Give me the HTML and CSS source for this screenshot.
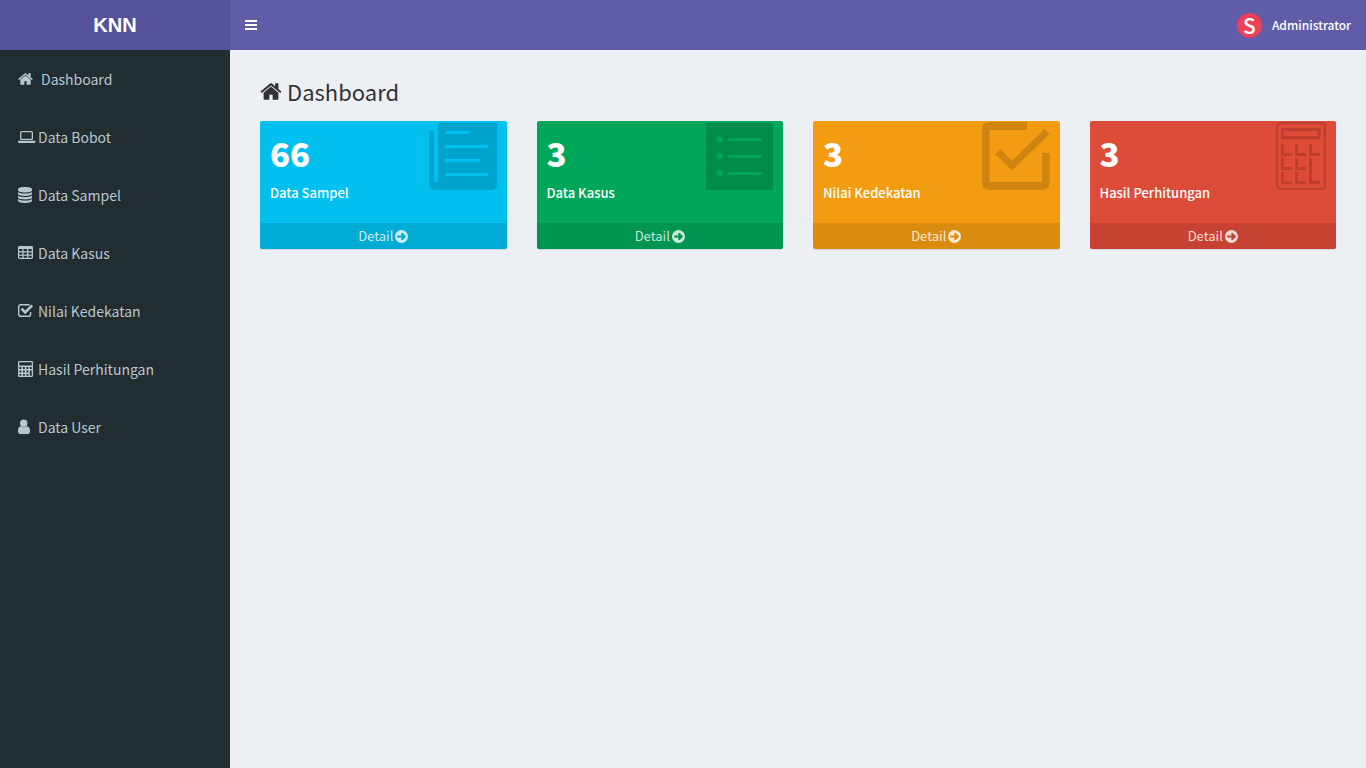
FILE: index.html
```html
<!DOCTYPE html>
<html lang="id">
<head>
<meta charset="utf-8">
<meta name="viewport" content="width=device-width, initial-scale=1">
<title>KNN - Dashboard</title>
<link rel="stylesheet" href="styles.css">
</head>
<body>
<svg class="sprite" aria-hidden="true">
  <symbol id="home" viewBox="64 0 1664 1792"><path d="M1472 992v480q0 26-19 45t-45 19h-384v-384h-256v384h-384q-26 0-45-19t-19-45v-480q0-1 .5-3t.5-3l575-474 575 474q1 2 1 6zm223-69l-62 74q-8 9-21 11h-3q-13 0-21-7l-692-577-692 577q-12 8-24 7-13-2-21-11l-62-74q-8-10-7-23.5t11-21.5l719-599q32-26 76-26t76 26l244 204v-195q0-14 9-23t23-9h192q14 0 23 9t9 23v408l219 182q10 8 11 21.5t-7 23.5z"/></symbol>
  <symbol id="arrow" viewBox="128 128 1536 1536"><path fill-rule="evenodd" d="M1413 896q0-27-18-45l-362-362q-18-18-45-18t-45 18l-91 91q-18 18-18 45t18 45l98 98h-502q-26 0-45 19t-19 45v128q0 26 19 45t45 19h502l-98 98q-18 18-18 45t18 45l91 91q18 18 45 18t45-18l362-362q18-18 18-45zM1664 896a768 768 0 1 1-1536 0a768 768 0 1 1 1536 0z"/></symbol>
</svg>
<header class="topbar">
  <a class="logo" href="#">KNN</a>
  <nav class="navbar">
    <button class="toggle" type="button" aria-label="Toggle navigation"><svg viewBox="0 0 12 10"><path d="M0 0h12v2H0zM0 4h12v2H0zM0 8h12v2H0z"/></svg></button>
    <a class="account" href="#"><span class="avatar">S</span>Administrator</a>
  </nav>
</header>
<div class="layout">
  <aside class="sidebar">
    <ul class="menu">
      <li><a class="menu-link menu-link-home" href="#"><svg class="menu-icon" viewBox="0 0 20 18"><use href="#home" y="1" width="15" height="16"/></svg>Dashboard</a></li>
      <li><a class="menu-link" href="#"><svg class="menu-icon" viewBox="0 0 20 18"><path fill-rule="evenodd" d="M3.500 3h10q1.500 0 1.500 1.500v6q0 1.500-1.500 1.500h-10q-1.500 0-1.500-1.500v-6q0-1.500 1.500-1.500zM3.300 4.200v6.500h10.400v-6.500zM0 12.800h17.500v1q0 1.200-1.500 1.200h-14.500q-1.500 0-1.500-1.200z"/></svg>Data Bobot</a></li>
      <li><a class="menu-link" href="#"><svg class="menu-icon" viewBox="0 0 20 18"><path d="M0 3.200C0 1.900 3 1 7 1s7 .9 7 2.200v1C14 5.500 11 6.500 7 6.500s-7-1-7-2.300zM0 6q2 1.600 7 1.600t7-1.600v1.800q0 2-7 2.100q-7-.1-7-2.100zM0 9.400q2 1.700 7 1.700t7-1.700v2q0 1.900-7 2q-7-.1-7-2zM0 12.900q2 1.700 7 1.700t7-1.700v1.900q0 2-7 2.200q-7-.2-7-2.200z"/></svg>Data Sampel</a></li>
      <li><a class="menu-link" href="#"><svg class="menu-icon" viewBox="0 0 20 18"><path fill-rule="evenodd" d="M1.400 2h12.200q1.400 0 1.400 1.400v10.200q0 1.400-1.400 1.400h-12.200q-1.400 0-1.400-1.400v-10.200q0-1.400 1.400-1.400zM1.200 5v2.300h3.200v-2.300zM5.600 5v2.300h3.500v-2.300zM10.400 5v2.300h3.300v-2.300zM1.200 8.400v2.200h3.200v-2.200zM5.600 8.400v2.200h3.500v-2.200zM10.400 8.400v2.200h3.300v-2.200zM1.200 11.700v2.100h3.200v-2.100zM5.600 11.700v2.100h3.500v-2.100zM10.400 11.700v2.100h3.300v-2.100z"/></svg>Data Kasus</a></li>
      <li><a class="menu-link" href="#"><svg class="menu-icon" viewBox="0 0 20 18"><path class="line" d="M11.700 2.900q-.5-.2-1.200-.2h-7.700q-2.100 0-2.100 2.100v7.400q0 2.100 2.100 2.100h7.700q2.100 0 2.100-2.100v-2.200"/><path d="M2.700 7.700l1.900-1.900 2.600 2.600 6-6 1.900 1.900-7.900 7.900z"/></svg>Nilai Kedekatan</a></li>
      <li><a class="menu-link" href="#"><svg class="menu-icon" viewBox="0 0 20 18"><path fill-rule="evenodd" d="M1.200 1h12.600q1.200 0 1.200 1.200v13.600q0 1.200-1.200 1.200h-12.600q-1.200 0-1.200-1.200v-13.600q0-1.200 1.200-1.200zM1.300 2.300v3.200h12.400v-3.200zM1.400 7.100v1.800h1.900v-1.800zM4.900 7.100v1.800h1.900v-1.800zM8.400 7.100v1.800h1.900v-1.800zM11.800 7.100v1.800h1.900v-1.800zM1.400 10.500v1.900h1.900v-1.900zM4.900 10.500v1.900h1.900v-1.900zM8.400 10.500v1.900h1.900v-1.900zM1.400 13.900v1.900h1.900v-1.900zM4.900 13.900v1.900h1.900v-1.900zM8.400 13.900v1.900h1.900v-1.900zM11.800 10.500v5.300h1.900v-5.300z"/></svg>Hasil Perhitungan</a></li>
      <li><a class="menu-link" href="#"><svg class="menu-icon" viewBox="0 0 20 18"><circle cx="5.800" cy="5.200" r="3.700"/><path d="M3 8.200q2.800 2.200 5.600 0Q12 8.200 12 13q0 3-2.300 3h-7.400q-2.300 0-2.300-3 0-4.800 3-4.800z"/></svg>Data User</a></li>
    </ul>
  </aside>
  <main class="content">
    <h1 class="title"><svg class="title-icon"><use href="#home"/></svg>Dashboard</h1>
    <div class="cards">
      <section class="card card-aqua">
        <div class="card-body"><strong class="count">66</strong><p class="label">Data Sampel</p></div>
        <svg class="card-icon" viewBox="0 0 68 68"><path fill-rule="evenodd" d="M9 1h59v61q0 6-6 6h-56q-6 0-6-6v-53h5v51h4zM16 9v3h24v-3zM16 23v3h43v-3zM16 37v3h35v-3zM16 51v3h43v-3z"/></svg>
        <a class="detail" href="#">Detail <svg class="arrow"><use href="#arrow"/></svg></a>
      </section>
      <section class="card card-green">
        <div class="card-body"><strong class="count">3</strong><p class="label">Data Kasus</p></div>
        <svg class="card-icon" viewBox="0 0 68 68"><path fill-rule="evenodd" d="M1 1h67v67H1zM11.500 17.500a3 3 0 1 0 6 0a3 3 0 1 0-6 0zM11.500 34.200a3 3 0 1 0 6 0a3 3 0 1 0-6 0zM11.500 51a3 3 0 1 0 6 0a3 3 0 1 0-6 0zM23 16v3h34v-3zM23 33v3h34v-3zM23 50v3h34v-3z"/></svg>
        <a class="detail" href="#">Detail <svg class="arrow"><use href="#arrow"/></svg></a>
      </section>
      <section class="card card-yellow">
        <div class="card-body"><strong class="count">3</strong><p class="label">Nilai Kedekatan</p></div>
        <svg class="card-icon" viewBox="0 0 68 68"><path d="M45 0v8H7.500v52H60V31h7.500v30q0 7-7 7H7.500q-7.500 0-7.500-7V7q0-7 7.500-7zM13.300 32l5-5L30 38.500 62.700 6.700l5 5L30 48.700z"/></svg>
        <a class="detail" href="#">Detail <svg class="arrow"><use href="#arrow"/></svg></a>
      </section>
      <section class="card card-red">
        <div class="card-body"><strong class="count">3</strong><p class="label">Hasil Perhitungan</p></div>
        <svg class="card-icon" viewBox="0 0 68 68"><g class="outline"><rect x="19" y="1" width="48" height="66" rx="4" stroke-width="2.500"/><path stroke-width="3" d="M24.500 7.500h36.500v8h-36.500zM24.500 22v10.500h9.500M38.500 22v10.500h9.500M52.500 22v10.500h9.500M24.500 36v10.500h9.500M38.500 36v10.500h9.500M24.500 50v10.500h9.500M38.500 50v10.500h9.500M52.500 36v24.500h9.500"/></g></svg>
        <a class="detail" href="#">Detail <svg class="arrow"><use href="#arrow"/></svg></a>
      </section>
    </div>
  </main>
</div>
</body>
</html>
```
FILE: styles.css
```css
* { box-sizing: border-box; }
body {
  margin: 0;
  min-height: 100vh;
  display: flex;
  flex-direction: column;
  background: #ecf0f5;
  color: #333;
  font: 14px/20px "Noto Sans CJK SC", "Noto Sans", sans-serif;
}
a { color: inherit; text-decoration: none; }
svg { fill: currentColor; }
.sprite { position: absolute; width: 0; height: 0; }

.topbar { display: flex; height: 50px; color: #fff; }
.logo {
  width: 230px;
  background: #555299;
  font: bold 20px/50px "Liberation Sans", Arial, sans-serif;
  text-align: center;
}
.navbar {
  flex: 1;
  display: flex;
  align-items: center;
  justify-content: space-between;
  padding-right: 15px;
  background: #605ca8;
}
.toggle {
  display: flex;
  padding: 15px;
  border: 0;
  background: none;
  color: inherit;
  cursor: pointer;
}
.toggle svg { width: 12px; height: 10px; }
.account { display: flex; align-items: center; gap: 10px; font-size: 12px; font-weight: 500; }
.avatar {
  width: 25px;
  height: 25px;
  border-radius: 50%;
  background: #ee4056;
  font: 500 21px/24px "Noto Sans CJK SC", sans-serif;
  text-align: center;
}

.layout { flex: 1; display: flex; }
.sidebar { width: 230px; background: #222d32; color: #b8c7ce; }
.menu { margin: 0; padding: 0; list-style: none; }
.menu-link {
  display: flex;
  align-items: center;
  height: 58px;
  padding-left: 18px;
}
.menu-icon { width: 20px; height: 18px; }
.menu-link-home .menu-icon { margin-right: 3px; }
.line { fill: none; stroke: currentColor; stroke-width: 1.4; }

.content { flex: 1; padding: 30px; }
.title {
  display: flex;
  align-items: center;
  gap: 5px;
  margin: 0 0 18px;
  font-size: 22px;
  font-weight: 400;
  line-height: 23px;
}
.title-icon { width: 22px; height: 23px; }
.cards { display: grid; grid-template-columns: repeat(4, 1fr); gap: 30px; }
.card {
  position: relative;
  overflow: hidden;
  border-radius: 2px;
  box-shadow: 0 1px 1px rgba(0, 0, 0, .1);
  color: #fff;
}
.card-aqua { background: #00c0ef; }
.card-green { background: #00a65a; }
.card-yellow { background: #f39c12; }
.card-red { background: #dd4b39; }
.card-body { padding: 12px 10px 20px; }
.count { display: block; font-size: 33px; font-weight: 900; line-height: 40px; }
.label { margin: 10px 0 0; font-size: 13px; font-weight: 500; line-height: 20px; }
.card-icon {
  position: absolute;
  top: 1px;
  right: 10px;
  width: 68px;
  height: 68px;
  color: rgba(0, 0, 0, .15);
}
.outline { fill: none; stroke: currentColor; }
.detail {
  display: flex;
  align-items: center;
  justify-content: center;
  gap: 2px;
  height: 26px;
  background: rgba(0, 0, 0, .1);
  color: rgba(255, 255, 255, .8);
  font-size: 13px;
}
.arrow { width: 13px; height: 13px; }
```
